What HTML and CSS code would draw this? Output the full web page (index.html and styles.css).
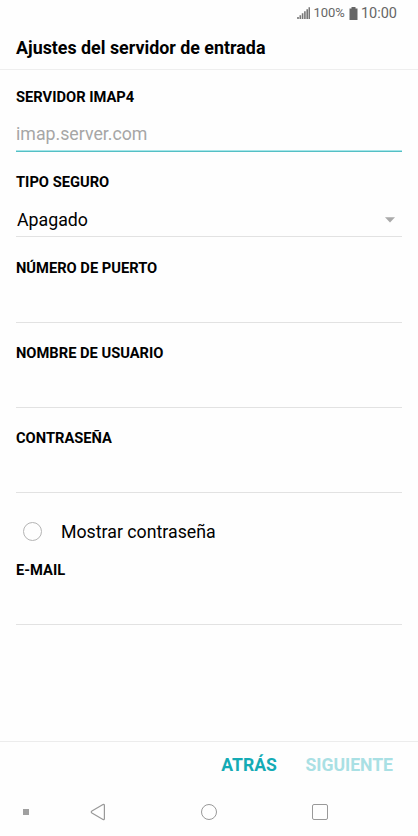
FILE: index.html
```html
<!DOCTYPE html>
<html lang="es">
<head>
    <meta charset="UTF-8">
    <meta name="viewport" content="width=device-width, initial-scale=1.0">
    <title>Ajustes del servidor de entrada</title>
    <link rel="stylesheet" href="styles.css">
</head>
<body>

<div class="screen">
    <div class="status-bar">
        <svg class="signal" width="13" height="12" viewBox="0 0 13 12">
            <path d="M1 12V10M3.3 12V8.2M5.6 12V6.2M7.9 12V4.2M10.2 12V2.2M12.3 12V0.3" stroke="#777" stroke-width="1.6"/>
        </svg>
        <span class="battery-text">100%</span>
        <svg class="battery" width="9" height="13" viewBox="0 0 9 13">
            <path d="M2.5 0h4v1.5H8.5V13H0.5V1.5h2z" fill="#666"/>
        </svg>
        <span class="clock">10:00</span>
    </div>

    <div class="header">
        <h1>Ajustes del servidor de entrada</h1>
    </div>

    <form class="settings-form">
        <div class="form-group">
            <label for="server">SERVIDOR IMAP4</label>
            <input class="active" type="text" id="server" name="server" placeholder="imap.server.com">
        </div>
        <div class="form-group">
            <label for="security">TIPO SEGURO</label>
            <div class="select" id="security">
                <span>Apagado</span>
                <svg width="10" height="6" viewBox="0 0 10 6"><path d="M0 0.3h10L5 5.6z" fill="#aaa"/></svg>
            </div>
        </div>
        <div class="form-group">
            <label for="port">NÚMERO DE PUERTO</label>
            <input type="text" id="port" name="port">
        </div>
        <div class="form-group">
            <label for="user">NOMBRE DE USUARIO</label>
            <input type="text" id="user" name="user">
        </div>
        <div class="form-group">
            <label for="password">CONTRASEÑA</label>
            <input type="password" id="password" name="password">
        </div>
        <div class="show-password">
            <span class="radio"></span>
            <span class="radio-text">Mostrar contraseña</span>
        </div>
        <div class="form-group">
            <label for="email">E-MAIL</label>
            <input type="text" id="email" name="email">
        </div>
    </form>

    <div class="buttons">
        <button type="button" class="btn btn-back">ATRÁS</button>
        <button type="button" class="btn btn-next">SIGUIENTE</button>
    </div>

    <div class="nav-bar">
        <span class="nav-dot"></span>
        <svg class="nav-back" width="16" height="18" viewBox="0 0 16 18">
            <path d="M13 1.6L1.9 8.1Q0.6 9 1.9 9.9L13 16.4Q14.4 17 14.4 15.4V2.6Q14.4 1 13 1.6z" fill="none" stroke="#999" stroke-width="1.2"/>
        </svg>
        <span class="nav-home"></span>
        <span class="nav-recent"></span>
    </div>
</div>

</body>
</html>
```
FILE: styles.css
```css
body {
    margin: 0;
    font-family: Roboto, sans-serif;
    background-color: #fefefe;
    color: #000;
}
.screen {
    display: flex;
    flex-direction: column;
    height: 836px;
    overflow: hidden;
}
.status-bar {
    display: flex;
    justify-content: flex-end;
    align-items: center;
    height: 26px;
    padding-right: 21px;
    color: #666;
}
.signal {
    margin-right: 3px;
}
.battery-text {
    font-size: 13px;
    line-height: 14px;
    margin-right: 4px;
    margin-top: -1px;
}
.battery {
    margin-right: 3px;
}
.clock {
    font-size: 14.5px;
}
.header {
    box-sizing: border-box;
    height: 44px;
    padding-left: 16px;
    border-bottom: 1px solid #eee;
}
h1 {
    margin: 0;
    font-size: 17.85px;
    font-weight: 700;
    line-height: 44px;
}
.settings-form {
    flex: 1;
    padding: 17px 16px 0;
}
.form-group {
    height: 65px;
    margin-bottom: 20.25px;
}
.form-group label {
    display: block;
    font-size: 14.7px;
    font-weight: 700;
    line-height: 21.4px;
}
.form-group input, .select {
    box-sizing: border-box;
    display: flex;
    width: 100%;
    height: 43.6px;
    padding: 10px 0 0;
    border: none;
    border-bottom: 1px solid #e2e2e2;
    background: transparent;
    font-family: inherit;
    font-size: 17.75px;
    outline: none;
}
.form-group input::placeholder {
    color: #a6a6a6;
}
.form-group input.active {
    padding-top: 9px;
    border-bottom: 1px solid #55bfc5;
    box-shadow: inset 0 -1px #a5e6e9;
}
.select {
    justify-content: space-between;
    align-items: center;
    padding: 10px 7px 0 1px;
}
.show-password {
    display: flex;
    align-items: center;
    height: 36px;
    margin-bottom: 10.5px;
    padding-left: 7px;
}
.radio {
    box-sizing: border-box;
    width: 19px;
    height: 19px;
    margin-right: 19px;
    border: 1.5px solid #b4b4b4;
    border-radius: 50%;
}
.radio-text {
    padding-top: 1px;
    font-size: 17.75px;
}
.buttons {
    box-sizing: border-box;
    display: flex;
    justify-content: flex-end;
    height: 46px;
    padding-right: 25px;
    border-top: 1px solid #ececec;
    gap: 28.5px;
}
.btn {
    padding: 0;
    border: none;
    background: transparent;
    font-family: inherit;
    font-size: 17.6px;
    font-weight: 700;
}
.btn-back {
    color: #14abb5;
}
.btn-next {
    color: #a9e0e4;
}
.nav-bar {
    display: flex;
    align-items: center;
    height: 49px;
    padding-left: 23px;
}
.nav-dot {
    width: 6px;
    height: 6px;
    background-color: #a0a0a0;
}
.nav-back {
    margin-left: 61px;
}
.nav-home, .nav-recent {
    box-sizing: border-box;
    width: 16px;
    height: 16px;
    border: 1px solid #999;
}
.nav-home {
    margin-left: 95px;
    border-radius: 50%;
}
.nav-recent {
    margin-left: 95px;
    border-radius: 2px;
}
```
